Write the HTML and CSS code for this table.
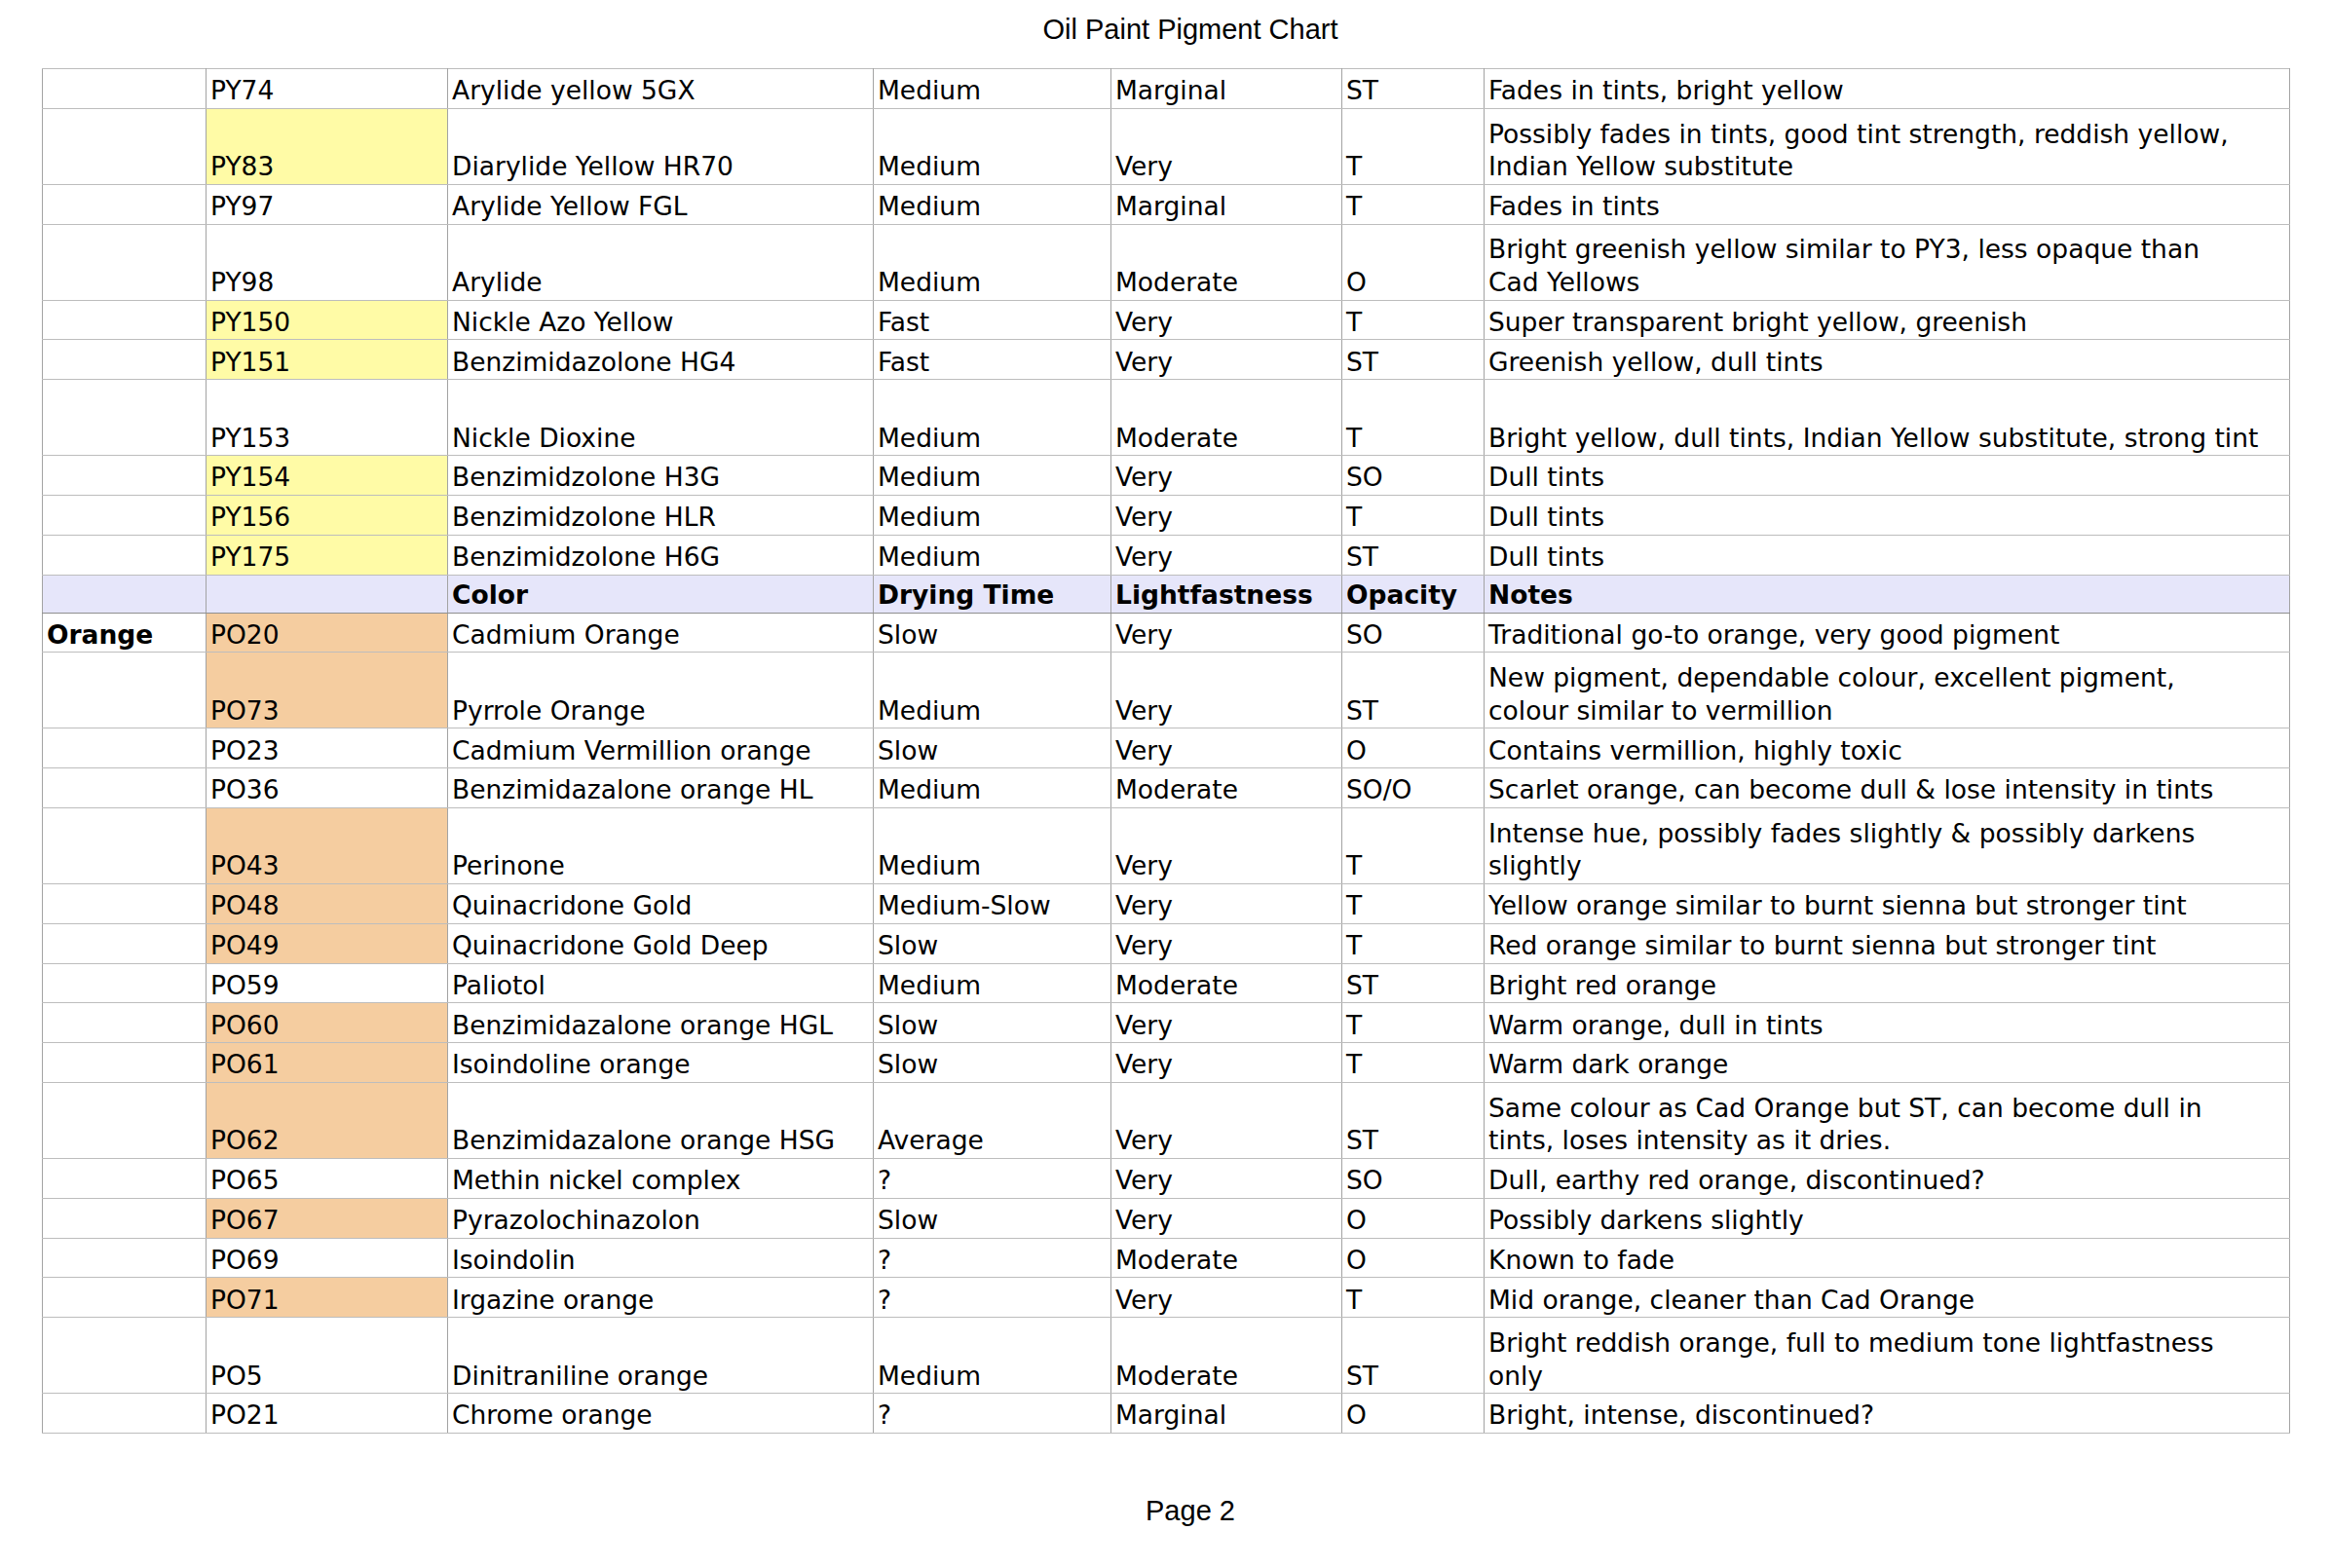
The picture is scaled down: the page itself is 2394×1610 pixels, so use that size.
FILE: index.html
```html
<!DOCTYPE html>
<html>
<head>
<meta charset="utf-8">
<title>Oil Paint Pigment Chart</title>
<link rel="stylesheet" href="styles.css">
</head>
<body>
<div class="page">
  <div class="page-title">Oil Paint Pigment Chart</div>
  <table class="chart">
    <colgroup>
      <col class="c-group"><col class="c-code"><col class="c-name"><col class="c-dry"><col class="c-light"><col class="c-op"><col class="c-notes">
    </colgroup>
    <tbody>
      <tr class="r1"><td></td><td>PY74</td><td>Arylide yellow 5GX</td><td>Medium</td><td>Marginal</td><td>ST</td><td>Fades in tints, bright yellow</td></tr>
      <tr class="r2"><td></td><td class="yel">PY83</td><td>Diarylide Yellow HR70</td><td>Medium</td><td>Very</td><td>T</td><td>Possibly fades in tints, good tint strength, reddish yellow,<br>Indian Yellow substitute</td></tr>
      <tr class="r1"><td></td><td>PY97</td><td>Arylide Yellow FGL</td><td>Medium</td><td>Marginal</td><td>T</td><td>Fades in tints</td></tr>
      <tr class="r2"><td></td><td>PY98</td><td>Arylide</td><td>Medium</td><td>Moderate</td><td>O</td><td>Bright greenish yellow similar to PY3, less opaque than<br>Cad Yellows</td></tr>
      <tr class="r1"><td></td><td class="yel">PY150</td><td>Nickle Azo Yellow</td><td>Fast</td><td>Very</td><td>T</td><td>Super transparent bright yellow, greenish</td></tr>
      <tr class="r1"><td></td><td class="yel">PY151</td><td>Benzimidazolone HG4</td><td>Fast</td><td>Very</td><td>ST</td><td>Greenish yellow, dull tints</td></tr>
      <tr class="r2"><td></td><td>PY153</td><td>Nickle Dioxine</td><td>Medium</td><td>Moderate</td><td>T</td><td>Bright yellow, dull tints, Indian Yellow substitute, strong tint</td></tr>
      <tr class="r1"><td></td><td class="yel">PY154</td><td>Benzimidzolone H3G</td><td>Medium</td><td>Very</td><td>SO</td><td>Dull tints</td></tr>
      <tr class="r1"><td></td><td class="yel">PY156</td><td>Benzimidzolone HLR</td><td>Medium</td><td>Very</td><td>T</td><td>Dull tints</td></tr>
      <tr class="r1"><td></td><td class="yel">PY175</td><td>Benzimidzolone H6G</td><td>Medium</td><td>Very</td><td>ST</td><td>Dull tints</td></tr>
      <tr class="rh"><td></td><td></td><td>Color</td><td>Drying Time</td><td>Lightfastness</td><td>Opacity</td><td>Notes</td></tr>
      <tr class="r1"><td class="grp">Orange</td><td class="org">PO20</td><td>Cadmium Orange</td><td>Slow</td><td>Very</td><td>SO</td><td>Traditional go-to orange, very good pigment</td></tr>
      <tr class="r2"><td></td><td class="org">PO73</td><td>Pyrrole Orange</td><td>Medium</td><td>Very</td><td>ST</td><td>New pigment, dependable colour, excellent pigment,<br>colour similar to vermillion</td></tr>
      <tr class="r1"><td></td><td>PO23</td><td>Cadmium Vermillion orange</td><td>Slow</td><td>Very</td><td>O</td><td>Contains vermillion, highly toxic</td></tr>
      <tr class="r1"><td></td><td>PO36</td><td>Benzimidazalone orange HL</td><td>Medium</td><td>Moderate</td><td>SO/O</td><td>Scarlet orange, can become dull &amp; lose intensity in tints</td></tr>
      <tr class="r2"><td></td><td class="org">PO43</td><td>Perinone</td><td>Medium</td><td>Very</td><td>T</td><td>Intense hue, possibly fades slightly &amp; possibly darkens<br>slightly</td></tr>
      <tr class="r1"><td></td><td class="org">PO48</td><td>Quinacridone Gold</td><td>Medium-Slow</td><td>Very</td><td>T</td><td>Yellow orange similar to burnt sienna but stronger tint</td></tr>
      <tr class="r1"><td></td><td class="org">PO49</td><td>Quinacridone Gold Deep</td><td>Slow</td><td>Very</td><td>T</td><td>Red orange similar to burnt sienna but stronger tint</td></tr>
      <tr class="r1"><td></td><td>PO59</td><td>Paliotol</td><td>Medium</td><td>Moderate</td><td>ST</td><td>Bright red orange</td></tr>
      <tr class="r1"><td></td><td class="org">PO60</td><td>Benzimidazalone orange HGL</td><td>Slow</td><td>Very</td><td>T</td><td>Warm orange, dull in tints</td></tr>
      <tr class="r1"><td></td><td class="org">PO61</td><td>Isoindoline orange</td><td>Slow</td><td>Very</td><td>T</td><td>Warm dark orange</td></tr>
      <tr class="r2"><td></td><td class="org">PO62</td><td>Benzimidazalone orange HSG</td><td>Average</td><td>Very</td><td>ST</td><td>Same colour as Cad Orange but ST, can become dull in<br>tints, loses intensity as it dries.</td></tr>
      <tr class="r1"><td></td><td>PO65</td><td>Methin nickel complex</td><td>?</td><td>Very</td><td>SO</td><td>Dull, earthy red orange, discontinued?</td></tr>
      <tr class="r1"><td></td><td class="org">PO67</td><td>Pyrazolochinazolon</td><td>Slow</td><td>Very</td><td>O</td><td>Possibly darkens slightly</td></tr>
      <tr class="r1"><td></td><td>PO69</td><td>Isoindolin</td><td>?</td><td>Moderate</td><td>O</td><td>Known to fade</td></tr>
      <tr class="r1"><td></td><td class="org">PO71</td><td>Irgazine orange</td><td>?</td><td>Very</td><td>T</td><td>Mid orange, cleaner than Cad Orange</td></tr>
      <tr class="r2"><td></td><td>PO5</td><td>Dinitraniline orange</td><td>Medium</td><td>Moderate</td><td>ST</td><td>Bright reddish orange, full to medium tone lightfastness<br>only</td></tr>
      <tr class="r1"><td></td><td>PO21</td><td>Chrome orange</td><td>?</td><td>Marginal</td><td>O</td><td>Bright, intense, discontinued?</td></tr>
    </tbody>
  </table>
  <div class="page-footer">Page 2</div>
</div>
</body>
</html>
```

FILE: styles.css
```css
html, body {
  margin: 0;
  padding: 0;
  background: #ffffff;
}

.page {
  width: 2394px;
  min-height: 1610px;
  color: #000;
}

.page-title,
.page-footer {
  font-family: "Liberation Sans", Arial, sans-serif;
  font-size: 29px;
  line-height: 29px;
  text-align: center;
  padding-left: 50px;
}

.page-title {
  padding-top: 16px;
  margin-bottom: 25px;
}

.page-footer {
  margin-top: 65px;
}

.chart {
  margin-left: 43px;
  width: 2307px;
  table-layout: fixed;
  border-collapse: collapse;
  font-family: "DejaVu Sans", Verdana, sans-serif;
  font-size: 26.5px;
  line-height: 33.6px;
}

.c-group { width: 168px; }
.c-code { width: 248px; }
.c-name { width: 437px; }
.c-dry { width: 244px; }
.c-light { width: 237px; }
.c-op { width: 146px; }
.c-notes { width: 827px; }

.chart td {
  border-left: 1px solid #a3a3a3;
  border-right: 1px solid #a3a3a3;
  border-top: 1px solid #bdbdbd;
  border-bottom: 1px solid #bdbdbd;
  padding: 0 4px 1px 4px;
  vertical-align: bottom;
  white-space: nowrap;
  overflow: visible;
}

.r1 { height: 40.8px; }
.r2 { height: 78px; }
.rh { height: 39px; }

.rh td {
  background: #e6e6fa;
  font-weight: bold;
  border-top-color: #8f8f8f;
  border-bottom-color: #8f8f8f;
}

.grp {
  font-weight: bold;
}

.yel {
  background: #fffba6;
}

.org {
  background: #f5cda0;
}
```
